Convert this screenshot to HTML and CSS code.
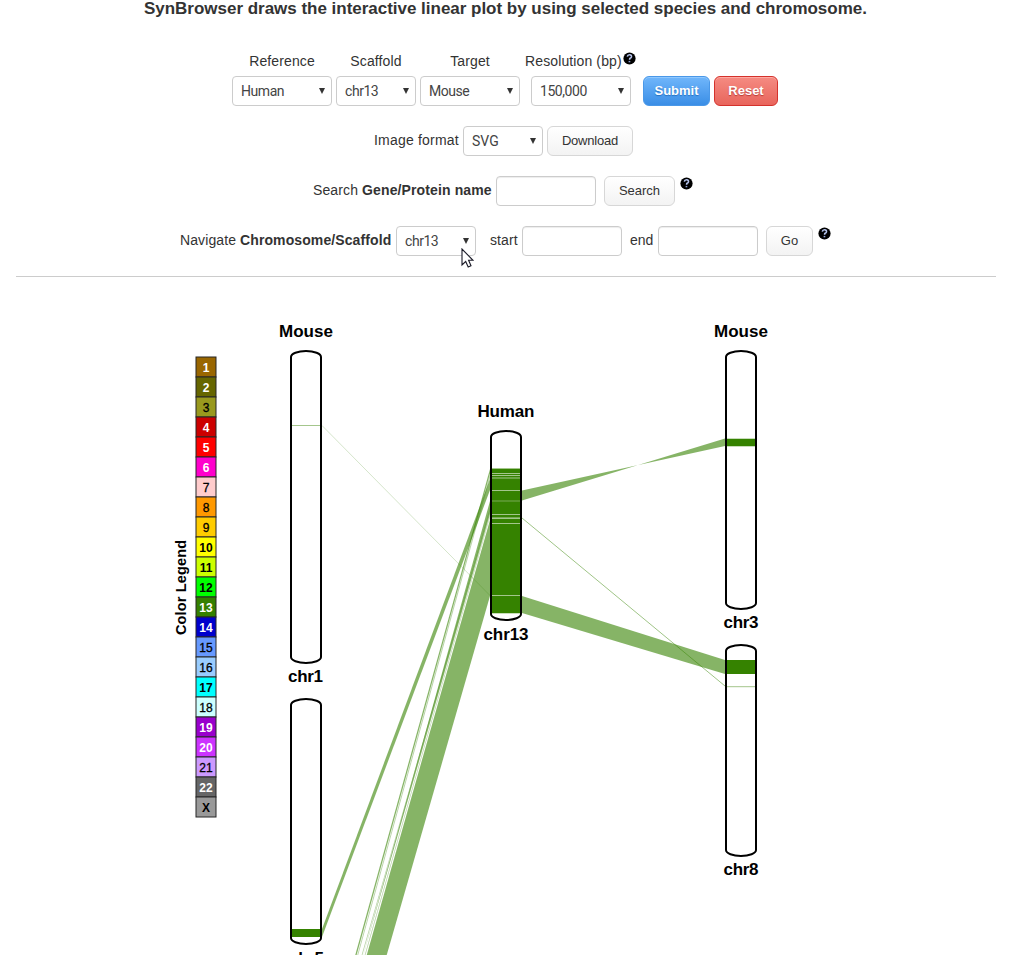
FILE: index.html
```
<!DOCTYPE html>
<html lang="en">
<head>
<meta charset="utf-8">
<title>SynBrowser</title>
<link rel="stylesheet" href="styles.css">
</head>
<body>
<svg class="defs" width="0" height="0">
  <symbol id="help" viewBox="0 0 13 13"><circle cx="6.5" cy="6.5" r="6.1" fill="#000"/><path d="M4.3 4.7Q4.6 2.7 6.7 2.8Q8.7 3 8.5 4.8Q8.3 5.9 6.8 6.4L6.5 7.7" fill="none" stroke="#b4c2ea" stroke-width="1.6"/><path d="M5.6 8.9h1.7v1.4H5.6z" fill="#8fa2d8"/></symbol>
</svg>
<main class="page">
  <h1 class="title"><span>SynBrowser draws the interactive linear plot by using selected species and chromosome.</span></h1>
  <form class="controls">
    <div class="row top">
      <label class="field"><span>Reference</span><span class="pick wide"><select><option>Human</option></select></span></label>
      <label class="field"><span>Scaffold</span><span class="pick"><select><option>chr13</option></select></span></label>
      <label class="field"><span>Target</span><span class="pick wide"><select><option>Mouse</option></select></span></label>
      <label class="field resolution"><span class="with-help">Resolution (bp)<svg class="help"><use href="#help"/></svg></span><span class="pick wide"><select><option>150,000</option></select></span></label>
      <button type="button" class="btn primary">Submit</button>
      <button type="button" class="btn danger">Reset</button>
    </div>
    <div class="row format"><span class="t t-format">Image format</span><span class="pick"><select><option>SVG</option></select></span><button type="button" class="btn download">Download</button></div>
    <div class="row search"><span class="t t-search">Search <b>Gene/Protein name</b></span><input type="text"><button type="button" class="btn find">Search</button><svg class="help"><use href="#help"/></svg></div>
    <div class="row navigate"><span class="t t-nav">Navigate <b>Chromosome/Scaffold</b></span><span class="pick"><select><option>chr13</option></select><svg class="cursor" viewBox="0 0 13 20"><path d="M1 1V17L4.7 13.5L7.2 19L10 17.8L7.6 12.3H12Z" fill="#fff" stroke="#1b1b28" stroke-width="1.1"/></svg></span><span class="t t-start">start</span><input type="text"><span class="t t-end">end</span><input type="text"><button type="button" class="btn go">Go</button><svg class="help"><use href="#help"/></svg></div>
  </form>
  <svg class="plot" viewBox="0 277 1014 678">
    <g class="ribbons">
      <path d="M322 929L490 479V490L322 937Z"/>
      <path d="M490 469V473.5L322 1080V1075Z"/>
      <path class="faint" d="M490 474V478L322 1086V1083Z"/>
      <path d="M490 501L322 1103V1099L490 514Z"/>
      <path class="faint" d="M490 515V517L322 1108V1105Z"/>
      <path class="faint" d="M490 508V510L322 1096V1093Z"/>
      <path d="M490 520V596L322 1180V1113Z"/>
      <path d="M522 490.5L725 446V438.5L522 500.5Z"/>
      <path d="M522 596L725 660V674L522 613Z"/>
      <path class="hair" d="M322 425.5L490 595.5"/>
      <path class="hair strong" d="M522 518L725 686"/>
    </g>
    <g class="blocks">
      <path d="M492 469h28v144h-28zM727 439h28v7h-28zM727 660h28v14h-28zM292 929h28v8h-28z"/>
      <path class="light" d="M492 468.5h28M292 425.5h28M727 686.7h28M492 473.5h28M492 475.5h28M492 478h28M492 490.5h28M492 514.5h28M492 518.5h28M492 523.5h28M492 595.5h28"/>
      <path class="light dim" d="M492 501h28M492 517.5h28M727 438.5h28M727 446.5h28M492 613.5h28"/>
    </g>
    <g class="chromosomes">
      <path d="M291 357A15 6 0 0 1 321 357V657A15 6 0 0 1 291 657Z"/>
      <path d="M291 705A15 6 0 0 1 321 705V938A15 6 0 0 1 291 938Z"/>
      <path d="M491 437A15 6 0 0 1 521 437V614A15 6 0 0 1 491 614Z"/>
      <path d="M726 357A15 6 0 0 1 756 357V603A15 6 0 0 1 726 603Z"/>
      <path d="M726 651A15 6 0 0 1 756 651V850A15 6 0 0 1 726 850Z"/>
    </g>
    <g class="names">
      <text x="306" y="337" textLength="54">Mouse</text>
      <text x="506" y="417" textLength="57">Human</text>
      <text x="741" y="337" textLength="54">Mouse</text>
      <text x="305.5" y="682" textLength="35">chr1</text>
      <text x="306.5" y="964" textLength="35">chr5</text>
      <text x="506" y="640" textLength="45">chr13</text>
      <text x="741" y="628" textLength="35">chr3</text>
      <text x="741" y="875" textLength="35">chr8</text>
    </g>
    <text class="legend-title" transform="translate(186 587.5) rotate(-90)" textLength="95">Color Legend</text>
    <g class="legend">
      <rect x="196" y="357" width="20" height="20" fill="#996600"/><text class="w" x="206" y="372">1</text>
      <rect x="196" y="377" width="20" height="20" fill="#666600"/><text class="w" x="206" y="392">2</text>
      <rect x="196" y="397" width="20" height="20" fill="#99991e"/><text class="n" x="206" y="412">3</text>
      <rect x="196" y="417" width="20" height="20" fill="#cc0000"/><text class="w" x="206" y="432">4</text>
      <rect x="196" y="437" width="20" height="20" fill="#ff0000"/><text class="w" x="206" y="452">5</text>
      <rect x="196" y="457" width="20" height="20" fill="#ff00cc"/><text class="w" x="206" y="472">6</text>
      <rect x="196" y="477" width="20" height="20" fill="#ffcccc"/><text class="n" x="206" y="492">7</text>
      <rect x="196" y="497" width="20" height="20" fill="#ff9900"/><text class="n" x="206" y="512">8</text>
      <rect x="196" y="517" width="20" height="20" fill="#ffcc00"/><text class="n" x="206" y="532">9</text>
      <rect x="196" y="537" width="20" height="20" fill="#ffff00"/><text x="206" y="552">10</text>
      <rect x="196" y="557" width="20" height="20" fill="#ccff00"/><text x="206" y="572">11</text>
      <rect x="196" y="577" width="20" height="20" fill="#00ff00"/><text x="206" y="592">12</text>
      <rect x="196" y="597" width="20" height="20" fill="#358000"/><text class="w" x="206" y="612">13</text>
      <rect x="196" y="617" width="20" height="20" fill="#0000cc"/><text class="w" x="206" y="632">14</text>
      <rect x="196" y="637" width="20" height="20" fill="#6699ff"/><text class="n" x="206" y="652">15</text>
      <rect x="196" y="657" width="20" height="20" fill="#99ccff"/><text class="n" x="206" y="672">16</text>
      <rect x="196" y="677" width="20" height="20" fill="#00ffff"/><text x="206" y="692">17</text>
      <rect x="196" y="697" width="20" height="20" fill="#ccffff"/><text class="n" x="206" y="712">18</text>
      <rect x="196" y="717" width="20" height="20" fill="#9900cc"/><text class="w" x="206" y="732">19</text>
      <rect x="196" y="737" width="20" height="20" fill="#cc33ff"/><text class="w" x="206" y="752">20</text>
      <rect x="196" y="757" width="20" height="20" fill="#cc99ff"/><text class="n" x="206" y="772">21</text>
      <rect x="196" y="777" width="20" height="20" fill="#666666"/><text class="w" x="206" y="792">22</text>
      <rect x="196" y="797" width="20" height="20" fill="#999999"/><text x="206" y="812">X</text>
    </g>
  </svg>
</main>
</body>
</html>
```
FILE: styles.css
```
* { box-sizing: border-box; }
body { margin: 0; background: #fff; color: #333; font: 14px/20px "Liberation Sans", Arial, sans-serif; overflow: hidden; }
.defs { position: absolute; }
.page { width: 1014px; height: 955px; display: flex; flex-direction: column; overflow: hidden; }
.title { margin: 0; height: 51px; padding-left: 144px; font-size: 17px; line-height: 17px; letter-spacing: -0.02px; white-space: nowrap; }
.controls { margin: 0 18px 0 16px; height: 226px; display: flex; flex-direction: column; gap: 20px; border-bottom: 1px solid #ccc; }
.row { display: flex; align-items: center; height: 30px; white-space: nowrap; }
.top { height: 55px; padding-left: 216px; align-items: flex-end; gap: 4px; }
.field { display: flex; flex-direction: column; align-items: center; gap: 5px; letter-spacing: 0.12px; }
.resolution { margin-left: 7px; margin-right: 8px; }
.with-help { position: relative; width: 100px; margin-left: -12px; }
.help { width: 13px; height: 13px; flex: none; }
.with-help .help { position: absolute; left: 98px; top: 1px; }
.pick { position: relative; display: block; width: 80px; height: 30px; flex: none; }
.pick.wide { width: 100px; }
.pick::after { content: ""; position: absolute; right: 7px; top: 12px; border: 3.5px solid transparent; border-top: 6px solid #333; border-bottom: 0; }
select, input { display: block; height: 30px; border: 1px solid #ccc; border-radius: 4px; background: #fff; color: #444; margin: 0; }
select { appearance: none; width: 100%; padding: 0 8px; font: 14px/20px Roboto, "Liberation Sans", sans-serif; letter-spacing: -0.45px; }
.format select { letter-spacing: 0; }
input { width: 100px; flex: none; box-shadow: inset 0 1px 1px rgba(0,0,0,.075); }
.t { padding-bottom: 2px; }
.btn { height: 30px; margin: 0; padding: 0; flex: none; border: 1px solid #d7d7d7; border-radius: 6px; background: linear-gradient(#fff, #f3f3f3); color: #333; font: 13px/20px "Liberation Sans", Arial, sans-serif; }
.primary { width: 67px; border-color: #4a98e8; background: linear-gradient(#70b6fb, #3a8ee6); color: #fff; font-weight: bold; text-shadow: 0 1px 1px #2672c0; box-shadow: inset 0 1px 0 #8fc8ff; }
.danger { width: 64px; border-color: #d4322c; background: linear-gradient(#f58b82, #e8655c); color: #fff; font-weight: bold; text-shadow: 0 1px 1px #b83b34; box-shadow: inset 0 1px 0 #ffaaa2; }
.format { padding-left: 358px; }
.t-format { width: 89px; letter-spacing: 0.2px; }
.download { width: 86px; margin-left: 4px; letter-spacing: -0.2px; }
.search { padding-left: 297px; }
.t-search { width: 183px; letter-spacing: 0.12px; }
.find { width: 71px; margin: 0 5px 0 8px; }
.search .help, .navigate > .help { align-self: flex-start; margin-top: 1px; }
.navigate { padding-left: 164px; }
.t-nav { width: 216px; letter-spacing: 0.1px; }
.t-start { width: 32px; margin-left: 14px; letter-spacing: 0.1px; }
.t-end { width: 28px; margin-left: 8px; }
.go { width: 47px; margin: 0 5px 0 8px; }
.cursor { position: absolute; z-index: 1; left: 65px; top: 22px; width: 13px; height: 20px; }
.plot { display: block; width: 1014px; height: 678px; flex: none; font-family: "Liberation Sans", Arial, sans-serif; }
.ribbons { fill: #358200; fill-opacity: .6; }
.ribbons .faint { fill-opacity: .35; }
.ribbons .hair { fill: none; stroke: #358200; stroke-width: .6; stroke-opacity: .35; }
.ribbons .strong { stroke-width: .8; stroke-opacity: .6; }
.blocks { fill: #358200; }
.blocks .light { fill: none; stroke: #a4c68c; stroke-width: 1; }
.blocks .dim { stroke-opacity: .6; }
.chromosomes { fill: none; stroke: #000; stroke-width: 2; }
.names { font-size: 17px; font-weight: bold; text-anchor: middle; }
.legend-title { font-size: 14.5px; font-weight: bold; text-anchor: middle; }
.legend { font-size: 12px; font-weight: bold; text-anchor: middle; }
.legend rect { stroke: #262626; stroke-width: 1; }
.legend .w { fill: #fff; }
.legend .n { font-weight: normal; stroke: #000; stroke-width: .3; }
```
